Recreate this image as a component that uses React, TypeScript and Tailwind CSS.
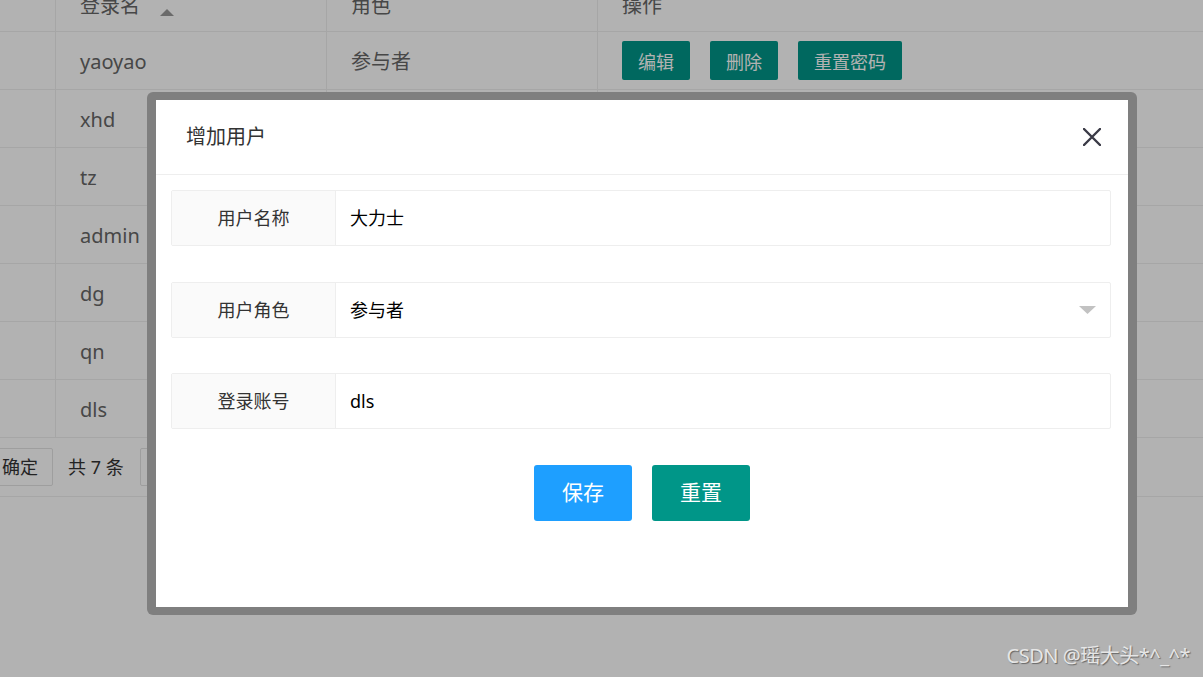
import React from 'react'

type UserRow = {
  login: string
  role: string
}

const rows: UserRow[] = [
  { login: 'yaoyao', role: '参与者' },
  { login: 'xhd', role: '参与者' },
  { login: 'tz', role: '参与者' },
  { login: 'admin', role: '管理员' },
  { login: 'dg', role: '参与者' },
  { login: 'qn', role: '参与者' },
  { login: 'dls', role: '参与者' },
]

const font = { fontFamily: '"Noto Sans", "Noto Sans CJK SC", sans-serif' }

function UserTable() {
  return (
    <div className="w-full bg-white text-[#666] text-[20px]">
      <div className="flex h-[52px] mt-[-20px] border-b border-[#eee]">
        <div className="w-[56px] shrink-0 border-r border-[#eee]" />
        <div className="w-[271px] shrink-0 border-r border-[#eee] pl-[24px] flex items-center gap-[20px]">
          <span>登录名</span>
          <svg width="14" height="7" viewBox="0 0 14 7" className="mt-[14px]">
            <polygon points="0,7 7,0 14,7" fill="#999" />
          </svg>
        </div>
        <div className="w-[271px] shrink-0 border-r border-[#eee] pl-[24px] flex items-center">角色</div>
        <div className="flex-1 pl-[24px] flex items-center">操作</div>
      </div>
      {rows.map((r) => (
        <div key={r.login} className="flex h-[58px] border-b border-[#eee]">
          <div className="w-[56px] shrink-0 border-r border-[#eee]" />
          <div className="w-[271px] shrink-0 border-r border-[#eee] pl-[24px] pt-[2px] flex items-center">
            {r.login}
          </div>
          <div className="w-[271px] shrink-0 border-r border-[#eee] pl-[24px] pt-[2px] flex items-center">
            {r.role}
          </div>
          <div className="flex-1 pl-[24px] flex items-center gap-[20px]">
            <button className="h-[39px] w-[68px] rounded-[2px] bg-[#009688] text-white text-[18px] pt-[3px]">编辑</button>
            <button className="h-[39px] w-[68px] rounded-[2px] bg-[#009688] text-white text-[18px] pt-[3px]">删除</button>
            <button className="h-[39px] w-[104px] rounded-[2px] bg-[#009688] text-white text-[18px] pt-[3px]">重置密码</button>
          </div>
        </div>
      ))}
      <div className="flex items-center h-[59px] border-b border-[#eee] text-[18px] text-[#333]">
        <div className="ml-[-13px] w-[66px] h-[38px] border border-[#e2e2e2] rounded-[2px] flex items-center justify-end pr-[14px]">
          确定
        </div>
        <span className="ml-[15px]">共 7 条</span>
        <div className="ml-[16px] w-[60px] h-[38px] border border-[#e2e2e2] rounded-[2px] flex items-center pl-[12px]">
          1
        </div>
      </div>
    </div>
  )
}

function FormRow({ label, children }: { label: string; children: React.ReactNode }) {
  return (
    <div className="flex h-[56px] border border-[#eee] rounded-[2px]">
      <div className="w-[164px] shrink-0 bg-[#fafafa] border-r border-[#eee] flex items-center justify-center text-[18px] text-[#333]">
        {label}
      </div>
      <div className="flex-1 flex items-center pl-[14px] pr-[14px] text-[18px] text-black">{children}</div>
    </div>
  )
}

function AddUserDialog() {
  return (
    <div className="absolute left-[147px] top-[92px] w-[990px] h-[523px] bg-[#7f7f7f] rounded-[6px] pt-[8px] pb-[8px] px-[9px]">
      <div className="w-full h-full bg-white flex flex-col">
        <div className="h-[75px] shrink-0 border-b border-[#eee] flex items-center justify-between pl-[30px] pr-[27px]">
          <span className="text-[20px] text-[#333]">增加用户</span>
          <svg width="18" height="18" viewBox="0 0 18 18">
            <path d="M1 1 L17 17 M17 1 L1 17" stroke="#3a3a46" strokeWidth="2.4" strokeLinecap="round" />
          </svg>
        </div>
        <div className="pt-[15px] pl-[15px] pr-[17px]">
          <FormRow label="用户名称">大力士</FormRow>
          <div className="mt-[36px]">
            <FormRow label="用户角色">
              <span className="flex-1">参与者</span>
              <svg width="17" height="8" viewBox="0 0 17 8">
                <polygon points="0,0 17,0 8.5,8" fill="#c2c2c2" />
              </svg>
            </FormRow>
          </div>
          <div className="mt-[35px]">
            <FormRow label="登录账号">dls</FormRow>
          </div>
          <div className="mt-[36px] flex justify-center gap-[20px] pl-[2px]">
            <button className="w-[98px] h-[56px] rounded-[3px] bg-[#1e9fff] text-white text-[21px]">保存</button>
            <button className="w-[98px] h-[56px] rounded-[3px] bg-[#009688] text-white text-[21px]">重置</button>
          </div>
        </div>
      </div>
    </div>
  )
}

export default function App() {
  return (
    <div className="relative w-[1203px] h-[677px] overflow-hidden bg-white" style={font}>
      <UserTable />
      <div className="absolute inset-0 bg-black/30" />
      <AddUserDialog />
      <div className="absolute right-[13px] bottom-[6px] text-[20px] tracking-[-0.5px] text-[#e6e6e6] [text-shadow:1px_1px_1px_#666]">
        CSDN @瑶大头*^_^*
      </div>
    </div>
  )
}
